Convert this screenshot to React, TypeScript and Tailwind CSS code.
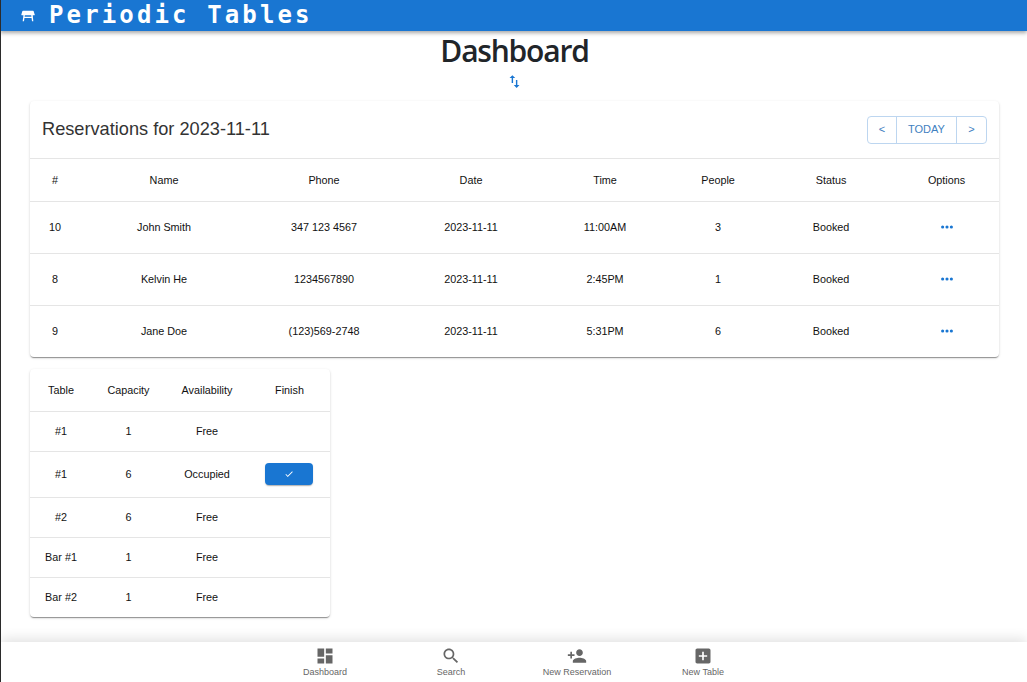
const sans = { fontFamily: '"Liberation Sans", Arial, sans-serif' };

const reservations = [
  { id: 10, name: 'John Smith', phone: '347 123 4567', date: '2023-11-11', time: '11:00AM', people: 3, status: 'Booked' },
  { id: 8, name: 'Kelvin He', phone: '1234567890', date: '2023-11-11', time: '2:45PM', people: 1, status: 'Booked' },
  { id: 9, name: 'Jane Doe', phone: '(123)569-2748', date: '2023-11-11', time: '5:31PM', people: 6, status: 'Booked' },
];

const tables = [
  { name: '#1', capacity: 1, availability: 'Free', height: 'h-[40px]' },
  { name: '#1', capacity: 6, availability: 'Occupied', height: 'h-[46px]' },
  { name: '#2', capacity: 6, availability: 'Free', height: 'h-[40px]' },
  { name: 'Bar #1', capacity: 1, availability: 'Free', height: 'h-[40px]' },
  { name: 'Bar #2', capacity: 1, availability: 'Free', height: 'h-[40px]' },
];

const navItems = [
  { label: 'Dashboard', d: 'M3 13h8V3H3v10zm0 8h8v-6H3v6zm10 0h8V11h-8v10zm0-18v6h8V3h-8z' },
  { label: 'Search', d: 'M15.5 14h-.79l-.28-.27C15.41 12.59 16 11.11 16 9.5 16 5.91 13.09 3 9.5 3S3 5.91 3 9.5 5.91 16 9.5 16c1.61 0 3.09-.59 4.23-1.57l.27.28v.79l5 4.99L20.49 19l-4.99-5zm-6 0C7.01 14 5 11.99 5 9.5S7.01 5 9.5 5 14 7.01 14 9.5 11.99 14 9.5 14z' },
  { label: 'New Reservation', d: 'M15 12c2.21 0 4-1.79 4-4s-1.79-4-4-4-4 1.79-4 4 1.79 4 4 4zm-9-2V7H4v3H1v2h3v3h2v-3h3v-2H6zm9 4c-2.67 0-8 1.34-8 4v2h16v-2c0-2.66-5.33-4-8-4z' },
  { label: 'New Table', d: 'M19 3H5c-1.11 0-2 .9-2 2v14c0 1.1.89 2 2 2h14c1.1 0 2-.9 2-2V5c0-1.1-.9-2-2-2zm-2 10h-4v4h-2v-4H7v-2h4V7h2v4h4v2z' },
];

function Icon({ d, className }: { d: string; className: string }) {
  return (
    <svg viewBox="0 0 24 24" fill="currentColor" className={className}>
      <path d={d} />
    </svg>
  );
}

function MoreDots() {
  return (
    <svg viewBox="0 0 16 16" fill="currentColor" className="w-[14px] h-[14px] mx-auto text-[#1976d2]">
      <circle cx="3" cy="8" r="1.8" />
      <circle cx="8" cy="8" r="1.8" />
      <circle cx="13" cy="8" r="1.8" />
    </svg>
  );
}

export default function App() {
  return (
    <div className="h-screen overflow-hidden flex flex-col bg-white border-l border-[#2b2b2b]" style={sans}>
      {/* App bar */}
      <header className="h-[31px] shrink-0 -ml-px bg-[#1976d2] text-white flex items-center pl-[20px] shadow-[0_2px_4px_rgba(0,0,0,0.35)] relative z-10">
        <Icon
          d="M21.96 9.73l-1.43-5c-.12-.43-.51-.73-.96-.73H4.43c-.45 0-.84.3-.96.73l-1.43 5c-.18.63.3 1.27.96 1.27h2.2L4 20h2l.67-5h10.67l.66 5h2l-.9-9h2.2c.67 0 1.15-.64.96-1.27zM6.93 13l.27-2h9.6l.27 2H6.93z"
          className="w-4 h-4 mr-[13px]"
        />
        <span className="text-[24px] font-bold tracking-[3.13px] leading-none -mt-[1px] [font-family:'DejaVu_Sans_Mono',monospace]">
          Periodic Tables
        </span>
      </header>

      <main className="flex-1 min-h-0 pl-[29px] pr-[28px]">
        <h1 className="text-[30px] leading-[42px] mt-[-1px] font-semibold tracking-[-1.2px] text-center text-[#212529] [font-family:'Open_Sans',sans-serif]">
          Dashboard
        </h1>
        <div className="flex justify-center h-[29px] pt-[1px]">
          <Icon d="M16 17.01V10h-2v7.01h-3L15 21l4-3.99h-3zM9 3L5 6.99h3V14h2V6.99h3L9 3z" className="w-[17px] h-[17px] text-[#1976d2]" />
        </div>

        {/* Reservations */}
        <section className="rounded shadow-[0_2px_1px_-1px_rgba(0,0,0,0.25),0_1px_1px_0_rgba(0,0,0,0.16),0_1px_3px_0_rgba(0,0,0,0.14)] bg-white">
          <div className="h-[58px] flex items-center justify-between pl-3 pr-3 border-b border-[#e5e5e5]">
            <h2 className="text-[18.2px] text-[#333333]">Reservations for 2023-11-11</h2>
            <div className="flex h-[28px] text-[11px] text-[#3f7fbf]">
              <button className="w-[30px] border border-[#bdd6f0] rounded-l">&lt;</button>
              <button className="w-[61px] -ml-px border border-[#bdd6f0]">TODAY</button>
              <button className="w-[31px] -ml-px border border-[#bdd6f0] rounded-r">&gt;</button>
            </div>
          </div>
          <table className="w-full table-fixed text-[10.8px] text-[#111111] text-center">
            <colgroup>
              <col className="w-[50px]" />
              <col className="w-[168px]" />
              <col className="w-[152px]" />
              <col className="w-[142px]" />
              <col className="w-[126px]" />
              <col className="w-[100px]" />
              <col className="w-[126px]" />
              <col />
            </colgroup>
            <thead>
              <tr className="h-[42px] border-b border-[#e5e5e5]">
                {['#', 'Name', 'Phone', 'Date', 'Time', 'People', 'Status', 'Options'].map((h) => (
                  <th key={h} className="font-normal">{h}</th>
                ))}
              </tr>
            </thead>
            <tbody>
              {reservations.map((r, i) => (
                <tr key={r.id} className={`h-[52px] ${i < 2 ? 'border-b border-[#e5e5e5]' : ''}`}>
                  <td>{r.id}</td>
                  <td>{r.name}</td>
                  <td>{r.phone}</td>
                  <td>{r.date}</td>
                  <td>{r.time}</td>
                  <td>{r.people}</td>
                  <td>{r.status}</td>
                  <td><MoreDots /></td>
                </tr>
              ))}
            </tbody>
          </table>
        </section>

        {/* Tables */}
        <section className="w-[300px] mt-[12px] rounded shadow-[0_2px_1px_-1px_rgba(0,0,0,0.25),0_1px_1px_0_rgba(0,0,0,0.16),0_1px_3px_0_rgba(0,0,0,0.14)] bg-white">
          <table className="w-full table-fixed text-[10.8px] text-[#111111] text-center">
            <colgroup>
              <col className="w-[62px]" />
              <col className="w-[73px]" />
              <col className="w-[84px]" />
              <col />
            </colgroup>
            <thead>
              <tr className="h-[42px] border-b border-[#e5e5e5]">
                {['Table', 'Capacity', 'Availability', 'Finish'].map((h) => (
                  <th key={h} className="font-normal">{h}</th>
                ))}
              </tr>
            </thead>
            <tbody>
              {tables.map((t, i) => (
                <tr key={i} className={`${t.height} ${i < 4 ? 'border-b border-[#e5e5e5]' : ''}`}>
                  <td>{t.name}</td>
                  <td>{t.capacity}</td>
                  <td>{t.availability}</td>
                  <td>
                    {t.availability === 'Occupied' && (
                      <button className="w-[48px] h-[22px] ml-[16px] rounded bg-[#1976d2] text-white flex items-center justify-center shadow-[0_2px_1px_-1px_rgba(0,0,0,0.2),0_1px_2px_0_rgba(0,0,0,0.14)]">
                        <Icon d="M9 16.17 4.83 12l-1.42 1.41L9 19 21 7l-1.41-1.41z" className="w-[10px] h-[10px]" />
                      </button>
                    )}
                  </td>
                </tr>
              ))}
            </tbody>
          </table>
        </section>
      </main>

      {/* Bottom navigation */}
      <nav className="h-[40px] shrink-0 bg-white flex justify-center text-[#666666] shadow-[0_-3px_12px_rgba(0,0,0,0.12)] relative">
        {navItems.map((item) => (
          <a key={item.label} className="w-[126px] flex flex-col items-center pt-[4px]">
            <Icon d={item.d} className="w-[20px] h-[20px]" />
            <span className="text-[9px] leading-[11px] mt-[1px]">{item.label}</span>
          </a>
        ))}
      </nav>
    </div>
  );
}
